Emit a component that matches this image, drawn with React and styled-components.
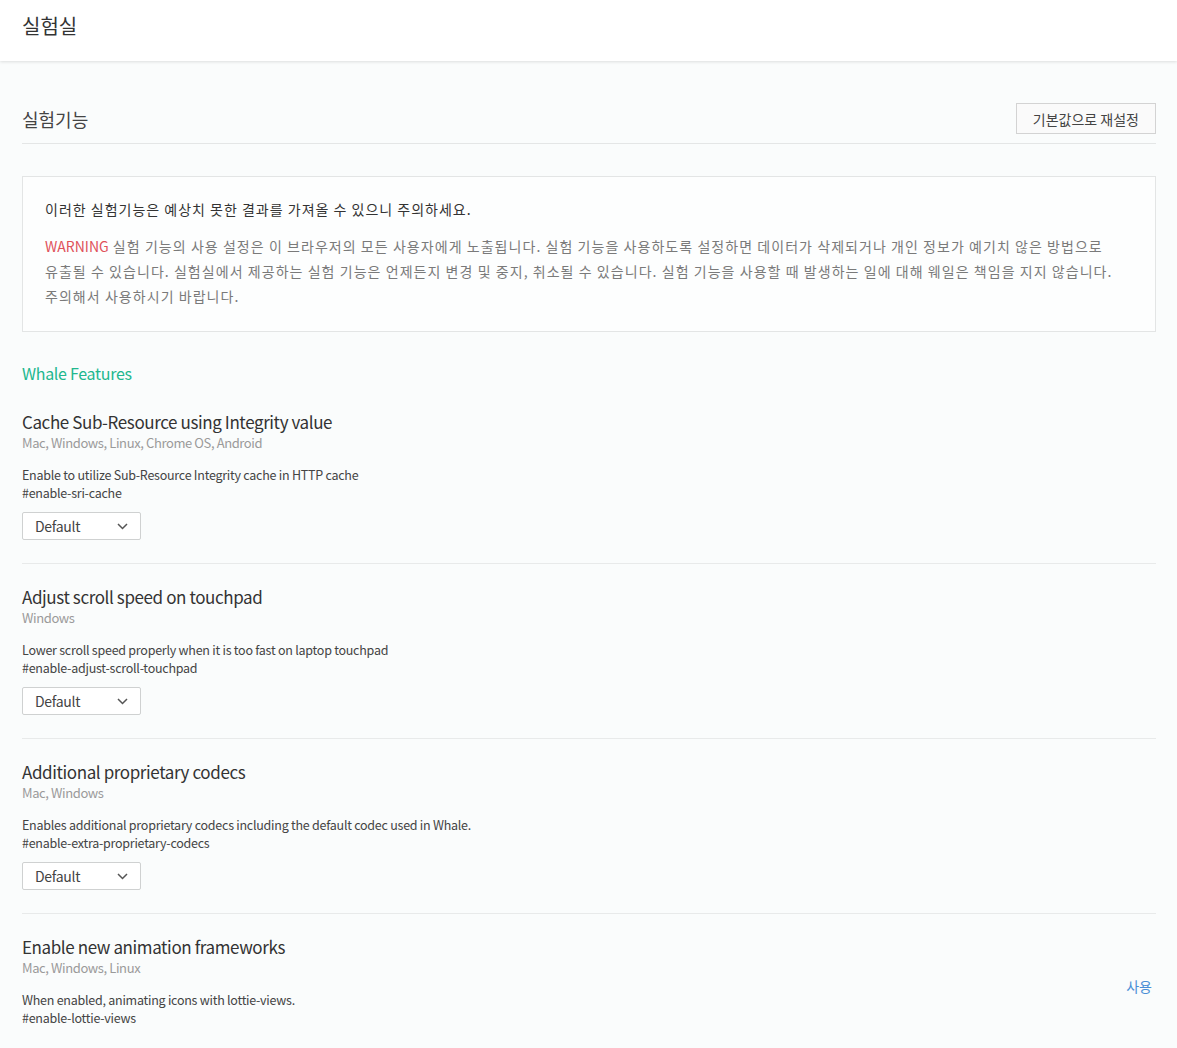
import React from 'react';
import styled, { createGlobalStyle } from 'styled-components';

const GlobalStyle = createGlobalStyle`
  html, body {
    margin: 0;
    padding: 0;
    background: #fafcfc;
    font-family: "Noto Sans CJK KR", "Noto Sans", sans-serif;
    color: #333;
  }
  * { box-sizing: border-box; }
`;

const Header = styled.header`
  height: 61px;
  background: #fff;
  box-shadow: 0 1px 3px rgba(0, 0, 0, 0.12);
  display: flex;
  align-items: center;
  padding: 0 22px 10px;
`;

const PageTitle = styled.h1`
  margin: 0;
  font-size: 20px;
  font-weight: 400;
  color: #333;
`;

const Main = styled.main`
  padding: 42px 21px 0 22px;
`;

const SectionHead = styled.div`
  display: flex;
  align-items: center;
  justify-content: space-between;
  padding-bottom: 9px;
  border-bottom: 1px solid #e4e6e6;
`;

const SectionTitle = styled.h2`
  margin: 0;
  font-size: 18px;
  font-weight: 400;
  color: #444;
`;

const ResetButton = styled.button`
  height: 31px;
  padding: 0 16px;
  background: #fafafa;
  border: 1px solid #d3d3d3;
  font-family: inherit;
  font-size: 14px;
  color: #444;
`;

const Notice = styled.div`
  margin-top: 32px;
  border: 1px solid #e3e5e5;
  background: #fdfefe;
  padding: 20px 22px 22px;
`;

const NoticeLead = styled.p`
  margin: 0 0 12px;
  font-size: 14px;
  line-height: 25px;
  color: #333;
  letter-spacing: 1px;
`;

const NoticeBody = styled.p`
  margin: 0;
  font-size: 14px;
  line-height: 25px;
  color: #7a7a7a;
  letter-spacing: 1.05px;
`;

const Warn = styled.span`
  color: #e0515a;
  letter-spacing: 0;
`;

const GroupTitle = styled.h3`
  margin: 29px 0 4px;
  font-size: 16px;
  font-weight: 400;
  color: #21b78e;
  letter-spacing: -0.3px;
`;

const Feature = styled.section`
  display: flex;
  align-items: center;
  justify-content: space-between;
  padding: 21px 0 23px;
  border-bottom: ${p => (p.$last ? 'none' : '1px solid #e8eaea')};
`;

const FeatureInfo = styled.div`
  display: flex;
  flex-direction: column;
`;

const FeatureName = styled.h4`
  margin: 0;
  font-size: 17px;
  font-weight: 400;
  line-height: 24px;
  color: #333;
  letter-spacing: -0.4px;
`;

const Platforms = styled.div`
  font-size: 13px;
  line-height: 18px;
  color: #9a9a9a;
  letter-spacing: -0.4px;
`;

const Desc = styled.div`
  margin-top: 14px;
  font-size: 12.5px;
  line-height: 18px;
  color: #444;
  letter-spacing: -0.25px;
`;

const Select = styled.div`
  margin-top: 10px;
  width: 119px;
  height: 28px;
  border: 1px solid #cfd1d1;
  border-radius: 2px;
  background: #fff;
  display: flex;
  align-items: center;
  justify-content: space-between;
  padding: 0 12px;
  font-size: 14px;
  color: #444;
  letter-spacing: -0.3px;
`;

const EnableLink = styled.span`
  font-size: 14px;
  color: #4a8fd6;
  margin-right: 4px;
  align-self: center;
  margin-top: 10px;
`;

const Chevron = () => (
  <svg width="11" height="7" viewBox="0 0 11 7" fill="none">
    <path d="M1 1l4.5 4.5L10 1" stroke="#555" strokeWidth="1.5" />
  </svg>
);

const features = [
  {
    name: 'Cache Sub-Resource using Integrity value',
    platforms: 'Mac, Windows, Linux, Chrome OS, Android',
    desc: 'Enable to utilize Sub-Resource Integrity cache in HTTP cache',
    hash: '#enable-sri-cache',
  },
  {
    name: 'Adjust scroll speed on touchpad',
    platforms: 'Windows',
    desc: 'Lower scroll speed properly when it is too fast on laptop touchpad',
    hash: '#enable-adjust-scroll-touchpad',
  },
  {
    name: 'Additional proprietary codecs',
    platforms: 'Mac, Windows',
    desc: 'Enables additional proprietary codecs including the default codec used in Whale.',
    hash: '#enable-extra-proprietary-codecs',
  },
  {
    name: 'Enable new animation frameworks',
    platforms: 'Mac, Windows, Linux',
    desc: 'When enabled, animating icons with lottie-views.',
    hash: '#enable-lottie-views',
    link: '사용',
  },
];

export default function App() {
  return (
    <>
      <GlobalStyle />
      <Header>
        <PageTitle>실험실</PageTitle>
      </Header>
      <Main>
        <SectionHead>
          <SectionTitle>실험기능</SectionTitle>
          <ResetButton>기본값으로 재설정</ResetButton>
        </SectionHead>
        <Notice>
          <NoticeLead>이러한 실험기능은 예상치 못한 결과를 가져올 수 있으니 주의하세요.</NoticeLead>
          <NoticeBody>
            <Warn>WARNING</Warn> 실험 기능의 사용 설정은 이 브라우저의 모든 사용자에게 노출됩니다. 실험 기능을 사용하도록 설정하면 데이터가 삭제되거나 개인 정보가 예기치 않은 방법으로
            <br />
            유출될 수 있습니다. 실험실에서 제공하는 실험 기능은 언제든지 변경 및 중지, 취소될 수 있습니다. 실험 기능을 사용할 때 발생하는 일에 대해 웨일은 책임을 지지 않습니다.
            <br />
            주의해서 사용하시기 바랍니다.
          </NoticeBody>
        </Notice>
        <GroupTitle>Whale Features</GroupTitle>
        {features.map((f, i) => (
          <Feature key={f.hash} $last={i === features.length - 1}>
            <FeatureInfo>
              <FeatureName>{f.name}</FeatureName>
              <Platforms>{f.platforms}</Platforms>
              <Desc>
                {f.desc}
                <br />
                {f.hash}
              </Desc>
              {!f.link && (
                <Select>
                  Default
                  <Chevron />
                </Select>
              )}
            </FeatureInfo>
            {f.link && <EnableLink>{f.link}</EnableLink>}
          </Feature>
        ))}
      </Main>
    </>
  );
}
